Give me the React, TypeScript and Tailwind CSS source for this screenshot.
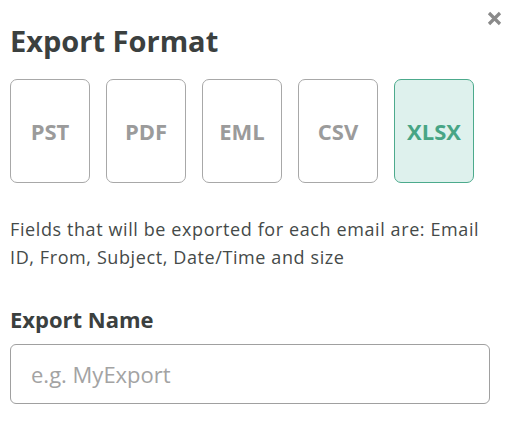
import React from "react";

const formats = ["PST", "PDF", "EML", "CSV", "XLSX"];

export default function App() {
  const selected = "XLSX";

  return (
    <div className="relative w-[510px] h-[426px] bg-white px-[10px] pt-[21px] text-[#3b403f] font-['Open_Sans',sans-serif]">
      {/* Close */}
      <button className="absolute right-[8px] top-[10px] w-[16px] h-[16px] flex items-center justify-center text-[#8a8a8a]" aria-label="Close">
        <svg width="15" height="15" viewBox="0 0 15 15">
          <path d="M2 2 L13 13 M13 2 L2 13" stroke="currentColor" strokeWidth="3.2" strokeLinecap="butt" />
        </svg>
      </button>

      <h2 className="text-[29px] leading-[40px] font-bold">Export Format</h2>

      <div className="flex gap-[16px] mt-[18px]">
        {formats.map((f) => {
          const active = f === selected;
          return (
            <div
              key={f}
              className={`w-[80px] h-[104px] rounded-[7px] border flex items-center justify-center text-[22px] font-bold ${
                active
                  ? "bg-[#def1ed] border-[#4caa8c] text-[#47a585]"
                  : "bg-white border-[#a8a8a8] text-[#9b9b9b]"
              }`}
            >
              {f}
            </div>
          );
        })}
      </div>

      <p className="mt-[32px] text-[18px] leading-[28px] tracking-[0.6px] text-[#454a49]">
        Fields that will be exported for each email are: Email ID, From, Subject, Date/Time and size
      </p>

      <label className="block mt-[33px] text-[22px] leading-[30px] font-bold">Export Name</label>

      <input
        className="block mt-[10px] w-[480px] h-[60px] rounded-[6px] border border-[#a0a0a0] px-[20px] text-[22px] outline-none placeholder:text-[#a3a3a3]"
        placeholder="e.g. MyExport"
      />
    </div>
  );
}
